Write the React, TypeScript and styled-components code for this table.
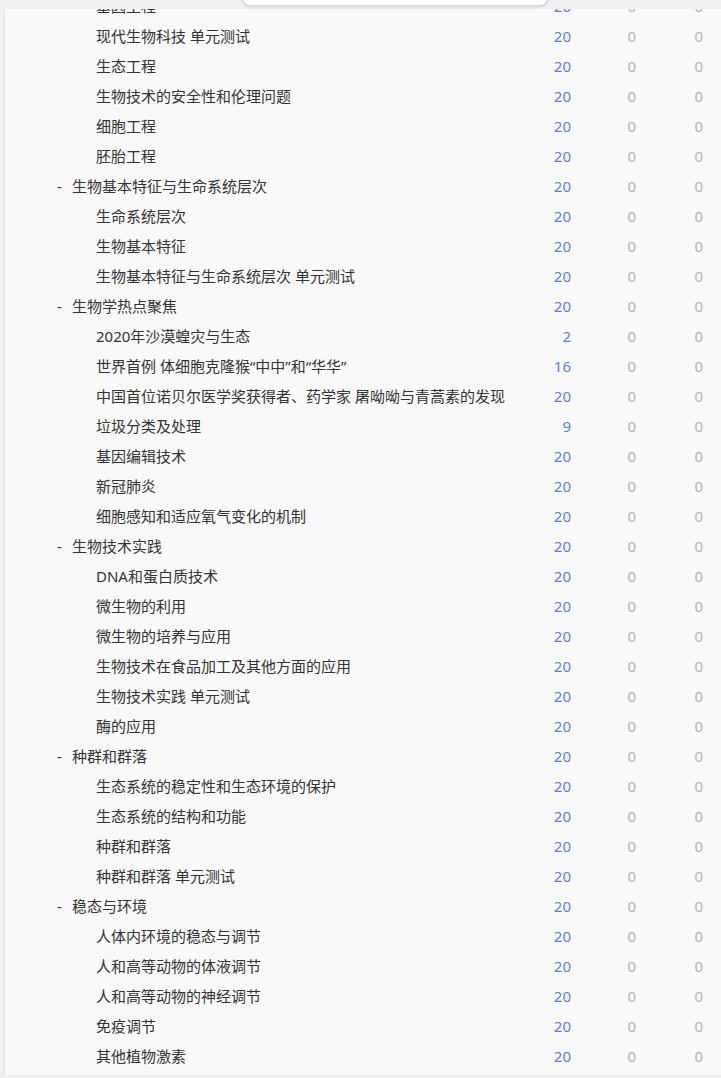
import React from "react";
import styled, { createGlobalStyle } from "styled-components";

const GlobalStyle = createGlobalStyle`
  html, body {
    margin: 0;
    padding: 0;
    background: #f1f1f1;
  }
  body {
    font-family: "Noto Sans", "Noto Sans CJK SC", sans-serif;
    font-size: 15px;
    color: #333;
  }
`;

type Row = {
  title: string;
  level: 1 | 2;
  total: number;
};

const rows: Row[] = [
  { title: "基因工程", level: 2, total: 20 },
  { title: "现代生物科技 单元测试", level: 2, total: 20 },
  { title: "生态工程", level: 2, total: 20 },
  { title: "生物技术的安全性和伦理问题", level: 2, total: 20 },
  { title: "细胞工程", level: 2, total: 20 },
  { title: "胚胎工程", level: 2, total: 20 },
  { title: "生物基本特征与生命系统层次", level: 1, total: 20 },
  { title: "生命系统层次", level: 2, total: 20 },
  { title: "生物基本特征", level: 2, total: 20 },
  { title: "生物基本特征与生命系统层次 单元测试", level: 2, total: 20 },
  { title: "生物学热点聚焦", level: 1, total: 20 },
  { title: "2020年沙漠蝗灾与生态", level: 2, total: 2 },
  { title: "世界首例 体细胞克隆猴“中中”和“华华”", level: 2, total: 16 },
  { title: "中国首位诺贝尔医学奖获得者、药学家 屠呦呦与青蒿素的发现", level: 2, total: 20 },
  { title: "垃圾分类及处理", level: 2, total: 9 },
  { title: "基因编辑技术", level: 2, total: 20 },
  { title: "新冠肺炎", level: 2, total: 20 },
  { title: "细胞感知和适应氧气变化的机制", level: 2, total: 20 },
  { title: "生物技术实践", level: 1, total: 20 },
  { title: "DNA和蛋白质技术", level: 2, total: 20 },
  { title: "微生物的利用", level: 2, total: 20 },
  { title: "微生物的培养与应用", level: 2, total: 20 },
  { title: "生物技术在食品加工及其他方面的应用", level: 2, total: 20 },
  { title: "生物技术实践 单元测试", level: 2, total: 20 },
  { title: "酶的应用", level: 2, total: 20 },
  { title: "种群和群落", level: 1, total: 20 },
  { title: "生态系统的稳定性和生态环境的保护", level: 2, total: 20 },
  { title: "生态系统的结构和功能", level: 2, total: 20 },
  { title: "种群和群落", level: 2, total: 20 },
  { title: "种群和群落 单元测试", level: 2, total: 20 },
  { title: "稳态与环境", level: 1, total: 20 },
  { title: "人体内环境的稳态与调节", level: 2, total: 20 },
  { title: "人和高等动物的体液调节", level: 2, total: 20 },
  { title: "人和高等动物的神经调节", level: 2, total: 20 },
  { title: "免疫调节", level: 2, total: 20 },
  { title: "其他植物激素", level: 2, total: 20 },
];

const Page = styled.div`
  position: relative;
  height: 1078px;
  padding: 9px 0 3px 3px;
  box-sizing: border-box;
  overflow: hidden;
`;

// bottom edge of a popup hanging in from above
const Dropdown = styled.div`
  position: absolute;
  top: -10px;
  left: 242px;
  width: 304px;
  height: 14px;
  background: #fff;
  border: 1px solid #d6d6d6;
  border-radius: 0 0 8px 8px;
  box-shadow: 0 1px 3px rgba(0, 0, 0, 0.12);
  z-index: 2;
`;

const Panel = styled.div`
  height: 100%;
  background: #f9f9f9;
  border-left: 2px solid #e9e9e9;
  overflow: hidden;
`;

const List = styled.ul`
  list-style: none;
  margin: -18px 0 0;
  padding: 0;
`;

const Item = styled.li<{ $level: 1 | 2 }>`
  display: grid;
  grid-template-columns: 1fr 60px 65px 67px;
  align-items: center;
  height: 30px;
  line-height: 30px;
  padding-left: ${(p) => (p.$level === 1 ? 52 : 91)}px;
  padding-right: 18px;
`;

const Title = styled.span`
  color: #333;
  white-space: nowrap;
`;

const Dash = styled.span`
  display: inline-block;
  width: 15px;
`;

const Count = styled.span<{ $zero?: boolean }>`
  text-align: right;
  color: ${(p) => (p.$zero ? "#b3b3b3" : "#5b80ee")};
`;

export default function App() {
  return (
    <>
      <GlobalStyle />
      <Page>
        <Dropdown />
        <Panel>
          <List>
            {rows.map((r, i) => (
              <Item key={i} $level={r.level}>
                <Title>
                  {r.level === 1 && <Dash>-</Dash>}
                  {r.title}
                </Title>
                <Count>{r.total}</Count>
                <Count $zero>0</Count>
                <Count $zero>0</Count>
              </Item>
            ))}
          </List>
        </Panel>
      </Page>
    </>
  );
}
